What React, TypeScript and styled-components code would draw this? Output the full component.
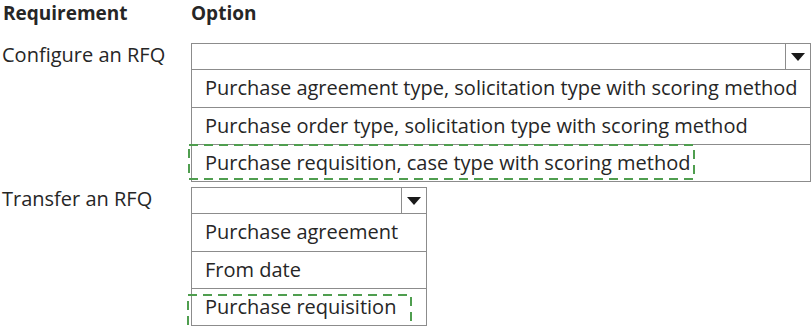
import React from "react";
import styled, { createGlobalStyle } from "styled-components";

const GlobalStyle = createGlobalStyle`
  body {
    margin: 0;
    background: #ffffff;
    font-family: "Open Sans", "Noto Sans", sans-serif;
    color: #262626;
  }
`;

const Page = styled.div`
  width: 812px;
  height: 326px;
  overflow: hidden;
  display: grid;
  grid-template-columns: 191px 1fr;
  grid-auto-rows: auto;
`;

const HeadCell = styled.div<{ $pad?: number }>`
  font-weight: 700;
  font-size: 19px;
  height: 43px;
  line-height: 26px;
  padding-left: ${(p) => p.$pad ?? 0}px;
  box-sizing: border-box;
`;

const Label = styled.div`
  font-size: 20px;
  padding-left: 2px;
  line-height: 22px;
  padding-top: 1px;
`;

const Dropdown = styled.div<{ $width: number; $gap?: number }>`
  width: ${(p) => p.$width}px;
  border: 1px solid #8c8c8c;
  margin-bottom: ${(p) => p.$gap ?? 0}px;
  box-sizing: border-box;
`;

const Select = styled.div`
  height: 26px;
  display: flex;
  justify-content: flex-end;
  border-bottom: 1px solid #8c8c8c;
  box-sizing: border-box;
`;

const Arrow = styled.div`
  width: 24px;
  border-left: 1px solid #8c8c8c;
  display: flex;
  align-items: center;
  justify-content: center;
`;

const Item = styled.div`
  position: relative;
  height: 37px;
  box-sizing: border-box;
  padding-left: 13px;
  font-size: 20px;
  line-height: 35px;
  white-space: nowrap;
  & + & {
    border-top: 1px solid #8c8c8c;
  }
`;

const Marker = styled.svg<{ $left: number; $top: number }>`
  position: absolute;
  left: ${(p) => p.$left}px;
  top: ${(p) => p.$top}px;
  pointer-events: none;
  overflow: visible;
`;

function Caret() {
  return (
    <svg width="14" height="8" viewBox="0 0 14 8">
      <path d="M0 0 H14 L7 8 Z" fill="#1a1a1a" />
    </svg>
  );
}

function Dashed({ left, top, w, h }: { left: number; top: number; w: number; h: number }) {
  return (
    <Marker $left={left} $top={top} width={w} height={h}>
      <rect
        x="1"
        y="1"
        width={w - 2}
        height={h - 2}
        fill="none"
        stroke="#4f9e4f"
        strokeWidth="2"
        strokeDasharray="9 6"
      />
    </Marker>
  );
}

type Row = { label: string; width: number; options: string[]; pick: { left: number; top: number; w: number; h: number } };

const rows: Row[] = [
  {
    label: "Configure an RFQ",
    width: 620,
    options: [
      "Purchase agreement type, solicitation type with scoring method",
      "Purchase order type, solicitation type with scoring method",
      "Purchase requisition, case type with scoring method",
    ],
    pick: { left: -4, top: -1, w: 507, h: 36 },
  },
  {
    label: "Transfer an RFQ",
    width: 236,
    options: ["Purchase agreement", "From date", "Purchase requisition"],
    pick: { left: -5, top: 5, w: 225, h: 34 },
  },
];

export default function App() {
  return (
    <>
      <GlobalStyle />
      <Page>
        <HeadCell $pad={3}>Requirement</HeadCell>
        <HeadCell>Option</HeadCell>
        {rows.map((r, ri) => (
          <React.Fragment key={r.label}>
            <Label>{r.label}</Label>
            <Dropdown $width={r.width} $gap={ri === 0 ? 5 : 0}>
              <Select>
                <Arrow>
                  <Caret />
                </Arrow>
              </Select>
              {r.options.map((o, i) => (
                <Item key={o}>
                  {o}
                  {i === r.options.length - 1 && <Dashed {...r.pick} />}
                </Item>
              ))}
            </Dropdown>
          </React.Fragment>
        ))}
      </Page>
    </>
  );
}
